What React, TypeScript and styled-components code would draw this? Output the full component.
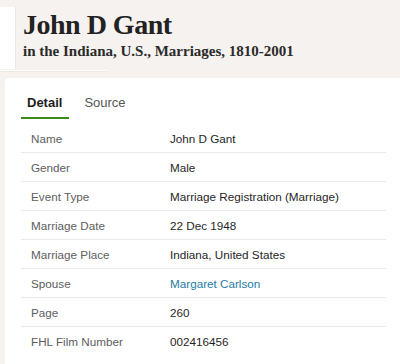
import React from "react";
import styled, { createGlobalStyle } from "styled-components";

interface Fact {
  label: string;
  value: string;
  link?: boolean;
}

const facts: Fact[] = [
  { label: "Name", value: "John D Gant" },
  { label: "Gender", value: "Male" },
  { label: "Event Type", value: "Marriage Registration (Marriage)" },
  { label: "Marriage Date", value: "22 Dec 1948" },
  { label: "Marriage Place", value: "Indiana, United States" },
  { label: "Spouse", value: "Margaret Carlson", link: true },
  { label: "Page", value: "260" },
  { label: "FHL Film Number", value: "002416456" }
];

function App() {
  return (
    <>
      <GlobalStyle />
      <Page>
        <Header>
          <SideStub />
          <TitleBlock>
            <Title>John D Gant</Title>
            <Subtitle>in the Indiana, U.S., Marriages, 1810-2001</Subtitle>
          </TitleBlock>
        </Header>
        <HeaderRule />
        <Card>
          <Tabs>
            <Tab active>Detail</Tab>
            <Tab>Source</Tab>
          </Tabs>
          <FactTable>
            {facts.map((fact, i) => (
              <FactRow key={fact.label} last={i === facts.length - 1}>
                <FactLabel>{fact.label}</FactLabel>
                {fact.link ? (
                  <FactLink href="#">{fact.value}</FactLink>
                ) : (
                  <FactValue>{fact.value}</FactValue>
                )}
              </FactRow>
            ))}
          </FactTable>
        </Card>
      </Page>
    </>
  );
}

const GlobalStyle = createGlobalStyle`
  html, body {
    margin: 0;
    padding: 0;
    background: #f5f2ef;
  }
  body {
    width: 400px;
    height: 364px;
    overflow: hidden;
    font-family: "Liberation Sans", Arial, sans-serif;
  }
`;

const Page = styled.div`
  display: flex;
  flex-direction: column;
  width: 400px;
  height: 364px;
  overflow: hidden;
  background: #f5f2ef;
`;

const Header = styled.div`
  display: flex;
  align-items: flex-start;
  height: 70px;
`;

const SideStub = styled.div`
  width: 15px;
  height: 62px;
  margin-top: 7px;
  background: #ffffff;
  border-right: 1px solid #ebe7e3;
`;

const TitleBlock = styled.div`
  display: flex;
  flex-direction: column;
  margin-left: 7px;
  padding-top: 9px;
`;

const Title = styled.h1`
  margin: 0;
  font-family: "Liberation Serif", "Times New Roman", serif;
  font-weight: 700;
  font-size: 28px;
  line-height: 32px;
  letter-spacing: -0.5px;
  color: #222222;
`;

const Subtitle = styled.h2`
  margin: 0;
  font-family: "Liberation Serif", "Times New Roman", serif;
  font-weight: 700;
  font-size: 15px;
  line-height: 20px;
  color: #2a2a2a;
`;

const HeaderRule = styled.div`
  width: 106px;
  height: 1px;
  background: #ffffff;
  border-bottom: 1px solid #ece8e4;
`;

const Card = styled.div`
  flex: 1;
  margin: 6px 0 0 5px;
  padding: 14px 14px 0 16px;
  background: #ffffff;
  border-radius: 4px 0 0 0;
`;

const Tabs = styled.div`
  display: flex;
  gap: 9px;
`;

const Tab = styled.div<{ active?: boolean }>`
  padding: 2px 7px 6px 6px;
  font-size: 13px;
  line-height: 17px;
  font-weight: ${p => (p.active ? 700 : 400)};
  color: ${p => (p.active ? "#1e1e1e" : "#555555")};
  border-bottom: 2px solid ${p => (p.active ? "#3b8a1a" : "transparent")};
`;

const FactTable = styled.div`
  display: flex;
  flex-direction: column;
  margin-top: 5px;
`;

const FactRow = styled.div<{ last?: boolean }>`
  display: grid;
  grid-template-columns: 139px 1fr;
  align-items: center;
  height: 28px;
  padding-left: 10px;
  border-bottom: 1px solid ${p => (p.last ? "transparent" : "#e9e9e9")};
  font-size: 11.7px;
`;

const FactLabel = styled.span`
  color: #5e5e5e;
`;

const FactValue = styled.span`
  color: #1f1f1f;
`;

const FactLink = styled.a`
  color: #1f7ba6;
  text-decoration: none;
`;

export default App;
